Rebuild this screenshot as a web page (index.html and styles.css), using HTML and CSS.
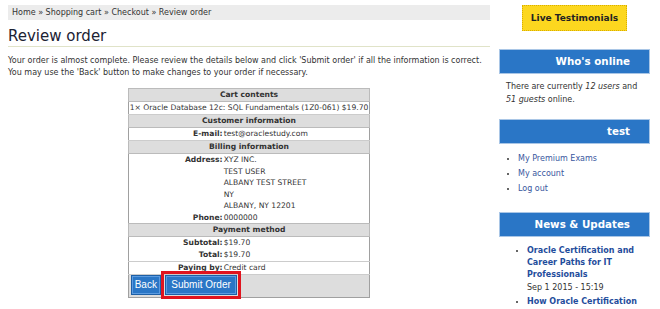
FILE: index.html
```html
<!DOCTYPE html>
<html lang="en">
<head>
    <meta charset="UTF-8">
    <title>Review order</title>
    <link rel="stylesheet" href="styles.css">
</head>
<body>
    <div class="page">
        <div class="main">
            <div class="breadcrumb">Home &raquo; Shopping cart &raquo; Checkout &raquo; Review order</div>
            <h1>Review order</h1>
            <p class="intro">Your order is almost complete. Please review the details below and click 'Submit order' if all the information is correct. You may use the 'Back' button to make changes to your order if necessary.</p>

            <table class="review">
                <tr class="pane-title"><td colspan="2">Cart contents</td></tr>
                <tr class="boxed"><td colspan="2">1&times; Oracle Database 12c: SQL Fundamentals (1Z0-061) $19.70</td></tr>
                <tr class="pane-title"><td colspan="2">Customer information</td></tr>
                <tr class="boxed"><td class="label">E-mail:</td><td>test@oraclestudy.com</td></tr>
                <tr class="pane-title"><td colspan="2">Billing information</td></tr>
                <tr class="address"><td class="label">Address:</td><td>XYZ INC.<br>TEST USER<br>ALBANY TEST STREET<br>NY<br>ALBANY, NY 12201</td></tr>
                <tr class="tight"><td class="label">Phone:</td><td>0000000</td></tr>
                <tr class="pane-title"><td colspan="2">Payment method</td></tr>
                <tr><td class="label">Subtotal:</td><td>$19.70</td></tr>
                <tr><td class="label">Total:</td><td>$19.70</td></tr>
                <tr class="boxed"><td class="label">Paying by:</td><td>Credit card</td></tr>
                <tr class="actions">
                    <td colspan="2">
                        <button class="btn">Back</button>
                        <button class="btn btn-submit">Submit Order</button>
                    </td>
                </tr>
            </table>
        </div>

        <div class="sidebar">
            <div class="testimonials"><a href="#">Live Testimonials</a></div>

            <div class="block">
                <h2>Who's online</h2>
                <p>There are currently <em>12 users</em> and <em>51 guests</em> online.</p>
            </div>

            <div class="block">
                <h2>test</h2>
                <ul class="menu">
                    <li><a href="#">My Premium Exams</a></li>
                    <li><a href="#">My account</a></li>
                    <li><a href="#">Log out</a></li>
                </ul>
            </div>

            <div class="block">
                <h2>News &amp; Updates</h2>
                <ul class="news">
                    <li><a href="#">Oracle Certification and Career Paths for IT Professionals</a><span class="date">Sep 1 2015 - 15:19</span></li>
                    <li><a href="#">How Oracle Certification</a></li>
                </ul>
            </div>
        </div>
    </div>
</body>
</html>
```

FILE: styles.css
```css
body {
    margin: 0;
    font-family: "DejaVu Sans", Verdana, sans-serif;
    font-size: 8px;
    color: #333;
    background: #fff;
}
.page {
    display: flex;
    gap: 9px;
    padding: 5px 0 0 8px;
}
.main {
    width: 482px;
}
.breadcrumb {
    background: #ececec;
    padding: 0 4px;
    line-height: 15px;
    color: #333;
}
h1 {
    margin: 7px 0 0;
    font-size: 15px;
    font-weight: normal;
    color: #1c2233;
    line-height: 18px;
    padding-bottom: 1px;
    border-bottom: 1px solid #e0e3c8;
}
.intro {
    margin: 8px 0 9px;
    line-height: 12px;
}
.review {
    margin: 0 auto;
    border-collapse: collapse;
    border: 1px solid #a0a0a0;
    width: 242px;
    font-size: 7.6px;
}
.review td {
    padding: 0 1px;
    line-height: 12px;
    vertical-align: top;
    white-space: nowrap;
}
.review .pane-title td {
    background: #ddd;
    text-align: center;
    font-weight: bold;
    border: 1px solid #bbb;
}
.review .boxed td {
    border-top: 1px solid #ccc;
    border-bottom: 1px solid #ccc;
}
.review .boxed td[colspan] {
    text-align: center;
}
.review .label {
    width: 93px;
    text-align: right;
    font-weight: bold;
    padding-right: 0;
}
.review .address td {
    line-height: 11.5px;
}
.review .tight td {
    line-height: 11px;
}
.review .actions td {
    background: #ddd;
    padding: 0 2px 2px;
    line-height: 20px;
}
.btn {
    font-family: "Liberation Sans", Arial, sans-serif;
    font-size: 10px;
    color: #fff;
    background: #2a76c6;
    border: 1px solid #1d5fa6;
    box-shadow: inset 0 0 0 1px #5b9be0;
    height: 20px;
    padding: 0 3px;
    margin-right: 2px;
    vertical-align: top;
}
.btn-submit {
    padding: 0 5px;
    outline: 3px solid #e0141e;
    outline-offset: 1px;
}
.sidebar {
    width: 151px;
}
.testimonials {
    text-align: center;
    margin-left: 23px;
    width: 105px;
}
.testimonials a {
    display: block;
    background: #fcd71f;
    border: 1px dotted #d9ae00;
    color: #222;
    font-weight: bold;
    font-size: 9px;
    line-height: 24px;
    text-decoration: none;
}
.block {
    margin-top: 13px;
}
.testimonials + .block {
    margin-top: 18px;
}
.block h2 {
    margin: 0;
    background: #2a76c6;
    color: #fff;
    font-size: 10.3px;
    line-height: 23px;
    text-align: right;
    padding-right: 19px;
    border: 1px solid #a9c6e6;
}
.block p {
    margin: 6px 10px 0 7px;
    line-height: 13px;
}
.menu {
    margin: 7px 0 0;
    padding: 0 0 3px 19px;
}
.menu li {
    line-height: 15px;
}
.menu a {
    color: #39579e;
    text-decoration: none;
}
.news {
    margin: 8px 0 0;
    padding-left: 28px;
}
.news li {
    line-height: 12px;
    margin-bottom: 2px;
}
.news a {
    color: #1f4d9c;
    font-weight: bold;
    text-decoration: none;
}
.news .date {
    display: block;
    margin-top: 1px;
}
```
